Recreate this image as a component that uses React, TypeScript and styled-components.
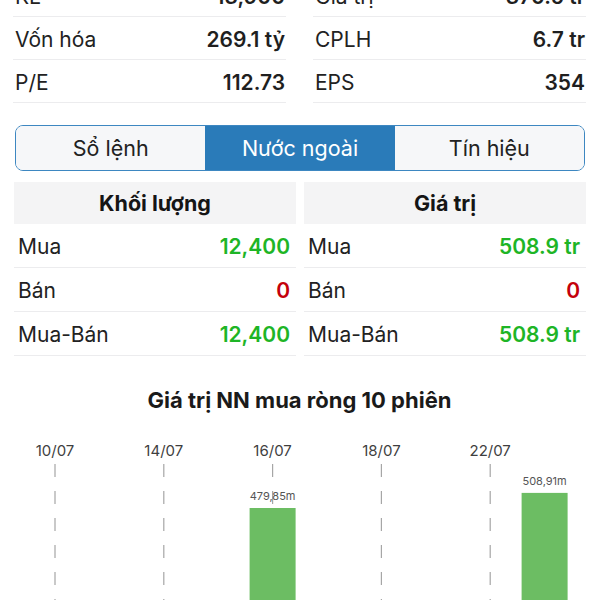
import styled, { createGlobalStyle } from 'styled-components';

const GlobalStyle = createGlobalStyle`
  html, body {
    margin: 0;
    padding: 0;
    background: #ffffff;
    font-family: Inter, "Noto Sans", sans-serif;
    color: #1c1c1e;
  }
`;

const Page = styled.div`
  height: 600px;
  overflow: hidden;
  padding: 0 14px 0 13px;
  box-sizing: border-box;
`;

const Stats = styled.div`
  display: grid;
  grid-template-columns: 1fr 1fr;
  column-gap: 27px;
  margin-top: -26px;
`;

const StatColumn = styled.div`
  display: flex;
  flex-direction: column;
`;

const StatRow = styled.div`
  display: flex;
  align-items: center;
  justify-content: space-between;
  height: 40px;
  padding-top: 2px;
  border-bottom: 1px solid #ececee;
  font-size: 21px;
`;

const Label = styled.span<{ $pad?: number }>`
  padding-left: ${(p) => p.$pad ?? 2}px;
  color: #222;
`;

const StatValue = styled.span`
  font-weight: 600;
  color: #1f1f1f;
  padding-right: 1px;
`;

const Tabs = styled.div`
  display: grid;
  grid-template-columns: repeat(3, 1fr);
  margin: 22px 1px 0 2px;
  height: 46px;
  border: 1.5px solid #3d87c1;
  border-radius: 8px;
  overflow: hidden;
  box-sizing: border-box;
`;

const Tab = styled.div<{ $active?: boolean }>`
  display: flex;
  align-items: center;
  justify-content: center;
  font-size: 21.5px;
  background: ${(p) => (p.$active ? '#2a7bb9' : '#f6f7f9')};
  color: ${(p) => (p.$active ? '#ffffff' : '#222')};
`;

const Tables = styled.div`
  display: grid;
  grid-template-columns: 1fr 1fr;
  column-gap: 8px;
  margin-top: 11px;
  padding-left: 1px;
`;

const Table = styled.div`
  display: flex;
  flex-direction: column;
`;

const TableHead = styled.div`
  height: 42px;
  background: #f4f4f5;
  display: flex;
  align-items: center;
  justify-content: center;
  font-size: 21.5px;
  font-weight: 700;
  color: #151515;
`;

const TableRow = styled.div`
  display: flex;
  align-items: center;
  justify-content: space-between;
  height: 42px;
  padding-top: 1px;
  border-bottom: 1px solid #ececee;
  font-size: 21px;
`;

const Amount = styled.span<{ $tone: 'up' | 'down' }>`
  font-weight: 600;
  padding-right: 6px;
  color: ${(p) => (p.$tone === 'up' ? '#1eb526' : '#c4000b')};
`;

const ChartTitle = styled.div`
  margin-top: 31px;
  line-height: 26px;
  text-align: center;
  font-size: 22px;
  font-weight: 700;
  color: #1a1a1a;
`;

const ChartSvg = styled.svg`
  display: block;
  margin-top: 8px;
  margin-left: 1px;
`;

const statsLeft = [
  ['KL', '13,900'],
  ['Vốn hóa', '269.1 tỷ'],
  ['P/E', '112.73'],
];

const statsRight = [
  ['Giá trị', '370.5 tr'],
  ['CPLH', '6.7 tr'],
  ['EPS', '354'],
];

const tables = [
  { title: 'Khối lượng', rows: [['Mua', '12,400', 'up'], ['Bán', '0', 'down'], ['Mua-Bán', '12,400', 'up']] },
  { title: 'Giá trị', rows: [['Mua', '508.9 tr', 'up'], ['Bán', '0', 'down'], ['Mua-Bán', '508.9 tr', 'up']] },
] as const;

// 10 sessions, a date label every other one
const sessions = [
  { date: '10/07' }, {}, { date: '14/07' }, {}, { date: '16/07', value: 479.85 },
  {}, { date: '18/07' }, {}, { date: '22/07' }, { value: 508.91 },
] as { date?: string; value?: number }[];

const SLOT = 54.4;
const X0 = 41;
const barTop = (v: number) => 87 - (v - 479.85) * 0.52;

function NetChart() {
  return (
    <ChartSvg width={572} height={190} viewBox="0 0 572 190">
      {sessions.map((s, i) => {
        const cx = X0 + i * SLOT;
        return (
          <g key={i}>
            {s.date && (
              <>
                <text x={cx} y={35} textAnchor="middle" fontSize={15} fill="#3f3f3f" fontFamily="Inter, sans-serif">
                  {s.date}
                </text>
                <line x1={cx} y1={43} x2={cx} y2={190} stroke="#a6a6a6" strokeWidth={1.2} strokeDasharray="13 14" />
              </>
            )}
            {s.value !== undefined && (
              <>
                <rect x={cx - 23} y={barTop(s.value)} width={46} height={190} fill="#6cbd63" />
                <text x={cx} y={barTop(s.value) - 8} textAnchor="middle" fontSize={11} fill="#555" fontFamily="Inter, sans-serif">
                  {s.value.toFixed(2).replace('.', ',')}m
                </text>
              </>
            )}
          </g>
        );
      })}
    </ChartSvg>
  );
}

function App() {
  return (
    <>
      <GlobalStyle />
      <Page>
        <Stats>
          <StatColumn>
            {statsLeft.map(([k, v]) => (
              <StatRow key={k}>
                <Label>{k}</Label>
                <StatValue>{v}</StatValue>
              </StatRow>
            ))}
          </StatColumn>
          <StatColumn>
            {statsRight.map(([k, v]) => (
              <StatRow key={k}>
                <Label>{k}</Label>
                <StatValue>{v}</StatValue>
              </StatRow>
            ))}
          </StatColumn>
        </Stats>

        <Tabs>
          <Tab>Sổ lệnh</Tab>
          <Tab $active>Nước ngoài</Tab>
          <Tab>Tín hiệu</Tab>
        </Tabs>

        <Tables>
          {tables.map((t) => (
            <Table key={t.title}>
              <TableHead>{t.title}</TableHead>
              {t.rows.map(([k, v, tone]) => (
                <TableRow key={k}>
                  <Label $pad={4}>{k}</Label>
                  <Amount $tone={tone}>{v}</Amount>
                </TableRow>
              ))}
            </Table>
          ))}
        </Tables>

        <ChartTitle>Giá trị NN mua ròng 10 phiên</ChartTitle>
        <NetChart />
      </Page>
    </>
  );
}

export default App;
